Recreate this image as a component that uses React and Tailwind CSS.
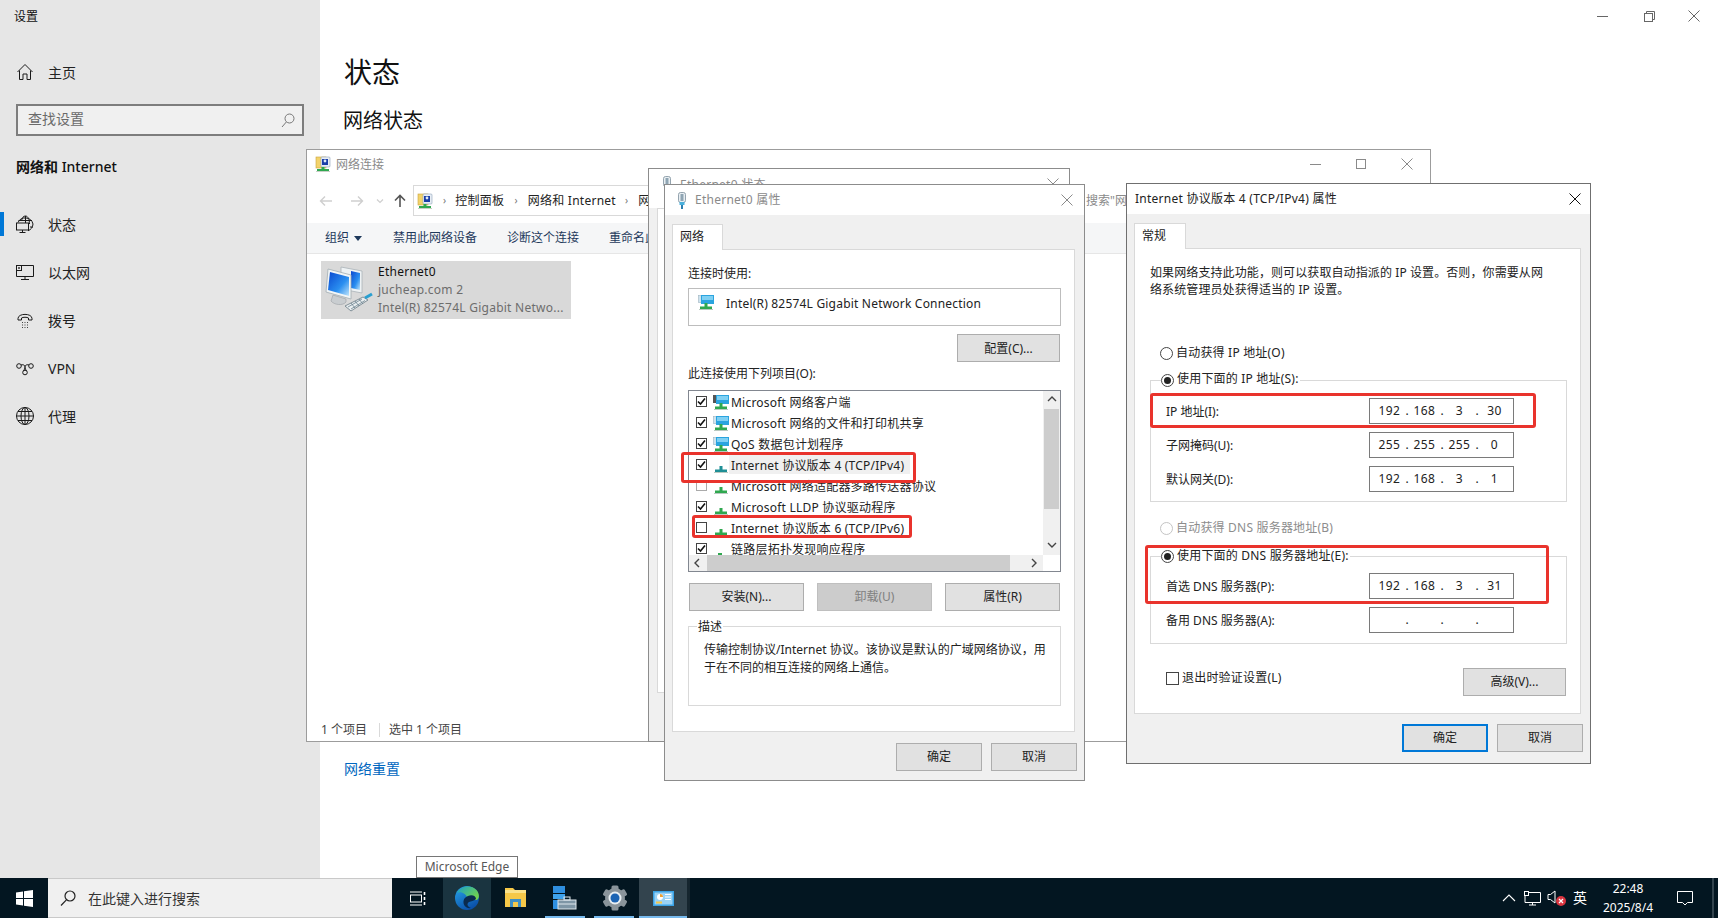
import React from "react";

const FONT = "font-['Noto_Sans','Noto_Sans_CJK_SC',sans-serif]";

function XIcon({ color = "#8a8a8a", size = 12 }) {
  return (
    <svg width={size} height={size} viewBox="0 0 12 12">
      <path d="M0.5 0.5 L11.5 11.5 M11.5 0.5 L0.5 11.5" stroke={color} strokeWidth="1" fill="none" />
    </svg>
  );
}

function NetBase({ teal, small }) {
  const c = teal ? "#1f8f96" : "#2fa84f";
  return small ? (
    <g>
      <rect x="5" y="12" width="4" height="3" fill={c} />
    </g>
  ) : (
    <g>
      <rect x="6.5" y="9" width="3" height="4" fill={c} />
      <rect x="2" y="12.5" width="12" height="2.5" fill={c} />
      <rect x="1" y="15" width="14" height="1" fill="#b9c9c0" />
    </g>
  );
}

function RowIcon({ type }) {
  return (
    <svg width="16" height="17" viewBox="0 0 16 17" className="shrink-0">
      {type === "pc" || type === "share" ? (
        <g>
          {type === "pc" ? <rect x="0" y="1" width="6" height="8" fill="#555" /> : <rect x="0.5" y="1.5" width="5" height="7" fill="#cfe3ee" stroke="#9fb5c2" strokeWidth="0.6" />}
          <rect x="3" y="1" width="13" height="9" fill="#2aa4df" />
          <rect x="4" y="2" width="11" height="4" fill="#7fd0f3" />
        </g>
      ) : null}
      <NetBase teal={type === "teal"} small={type === "tiny"} />
    </svg>
  );
}

function FolderNetIcon() {
  return (
    <svg width="16" height="16" viewBox="0 0 16 16" className="shrink-0">
      <rect x="1" y="1" width="10" height="11" fill="#f3d36b" stroke="#c9a43f" strokeWidth="0.6" />
      <rect x="6" y="1" width="9" height="10" rx="1" fill="#e8eef5" stroke="#8fa3b8" strokeWidth="0.6" />
      <rect x="7" y="3" width="6" height="6" fill="#1a3fa8" />
      <circle cx="10" cy="5" r="1.4" fill="#dfe9f5" />
      <rect x="6.5" y="11" width="3" height="2" fill="#2fa84f" />
      <rect x="2" y="13" width="12" height="2" fill="#2fa84f" />
      <rect x="1" y="15" width="14" height="1" fill="#c8cfc6" />
    </svg>
  );
}

function LargeNetIcon() {
  return (
    <svg width="48" height="52" viewBox="0 0 48 52" className="shrink-0">
      <defs>
        <linearGradient id="scr" x1="0" y1="0" x2="1" y2="1">
          <stop offset="0" stopColor="#0a48d0" />
          <stop offset="0.6" stopColor="#2a8ff0" />
          <stop offset="1" stopColor="#bfe4fb" />
        </linearGradient>
      </defs>
      <path d="M16 3 L37 7 L37 29 L16 25 Z" fill="#eef2f4" stroke="#a9b3b8" strokeWidth="0.8" />
      <path d="M26 7 L35 9 L35 26 L26 24 Z" fill="url(#scr)" />
      <path d="M3 5 L26 11 L26 35 L1 28 Z" fill="#f2f5f6" stroke="#a2adb3" strokeWidth="0.8" />
      <path d="M5 8 L24 13 L24 32 L3 26 Z" fill="url(#scr)" />
      <path d="M8 31 L21 35 L21 38 C18 42 9 41 6 37 Z" fill="#c9cdd0" stroke="#9aa0a4" strokeWidth="0.6" />
      <path d="M20 42 L38 33 L43 36 L26 47 Z" fill="#e9eef0" stroke="#76868f" strokeWidth="0.9" />
      <path d="M23 43 L37 35 M26 45 L40 36.5 M26 39 L30 44 M30 37 L34 42 M34 35 L38 40" stroke="#6f8490" strokeWidth="0.8" />
      <path d="M40 34 L47 30" stroke="#2a9fd0" strokeWidth="3" />
    </svg>
  );
}

function UsbIcon() {
  return (
    <svg width="12" height="17" viewBox="0 0 12 17" className="shrink-0">
      <rect x="2.5" y="0.5" width="7" height="10" rx="2" fill="#e8eef2" stroke="#7c8f9c" strokeWidth="0.8" />
      <rect x="4.5" y="2" width="3" height="7" fill="#8fa5b3" />
      <rect x="3.5" y="10" width="5" height="3" fill="#4ab0dc" />
      <rect x="5" y="13" width="2" height="4" fill="#2c7fb0" />
    </svg>
  );
}

function Btn({ children, cls = "", disabled, primary }) {
  return (
    <div
      className={
        "flex items-center justify-center h-[28px] text-[12px] " +
        (primary ? "border-2 border-[#0078d7] bg-[#e1e1e1] text-[#222] " : disabled ? "border border-[#bfbfbf] bg-[#cccccc] text-[#808080] " : "border border-[#adadad] bg-[#e1e1e1] text-[#222] ") +
        cls
      }
    >
      {children}
    </div>
  );
}

function Check({ checked, faint }) {
  return (
    <div className={"w-[11px] h-[11px] border bg-white flex items-center justify-center shrink-0 " + (faint ? "border-[#aaaaaa]" : "border-[#444]")}>
      {checked && (
        <svg width="9" height="9" viewBox="0 0 9 9">
          <path d="M1 4.5 L3.5 7 L8 1.5" stroke="#111" strokeWidth="1.6" fill="none" />
        </svg>
      )}
    </div>
  );
}

function Radio({ checked, disabled }) {
  return (
    <div className={"w-[13px] h-[13px] rounded-full border bg-white flex items-center justify-center shrink-0 " + (disabled ? "border-[#c4c4c4]" : "border-[#444]")}>
      {checked && <div className="w-[7px] h-[7px] rounded-full bg-[#222]" />}
    </div>
  );
}

function Chevron({ dir, color = "#444" }) {
  const d = { up: "M1 6 L5 2 L9 6", down: "M1 2 L5 6 L9 2", left: "M6 1 L2 5 L6 9", right: "M3 1 L7 5 L3 9" }[dir];
  return (
    <svg width="10" height="10" viewBox="0 0 10 10">
      <path d={d} stroke={color} strokeWidth="1.4" fill="none" />
    </svg>
  );
}

function Tab({ label, cls }) {
  return (
    <div className={"relative z-10 -mb-px h-[26px] bg-white border border-b-0 border-[#d9d9d9] text-[12px] text-[#222] pl-[7px] pt-[3px] leading-[18px] " + cls}>{label}</div>
  );
}

const rows = [
  { t: "Microsoft 网络客户端", c: true, i: "pc" },
  { t: "Microsoft 网络的文件和打印机共享", c: true, i: "share" },
  { t: "QoS 数据包计划程序", c: true, i: "share" },
  { t: "Internet 协议版本 4 (TCP/IPv4)", c: true, i: "teal", sel: true },
  { t: "Microsoft 网络适配器多路传送器协议", c: false, i: "net", faint: true },
  { t: "Microsoft LLDP 协议驱动程序", c: true, i: "net" },
  { t: "Internet 协议版本 6 (TCP/IPv6)", c: false, i: "net", gray: true },
  { t: "链路层拓扑发现响应程序", c: true, i: "tiny" },
];

function ListBox() {
  return (
    <div className="mt-[7px] w-[373px] h-[182px] border border-[#828790] bg-white flex flex-col">
      <div className="flex h-[164px]">
        <div className="w-[354px] h-[164px] overflow-hidden">
          {rows.map((r) => (
            <div key={r.t} className="flex items-center h-[21px] pl-[7px] text-[12px] text-[#222] whitespace-nowrap">
              <Check checked={r.c} faint={r.faint} />
              <div className="ml-[6px] translate-y-[1px]">
                <RowIcon type={r.i} />
              </div>
              <span className={"ml-0 pl-[2px] pr-[6px] h-[19px] leading-[21px] tracking-[0.22px] " + (r.sel ? "bg-[#f0f0f0]" : "")}>{r.t}</span>
            </div>
          ))}
        </div>
        <div className="w-[17px] h-[164px] bg-[#f0f0f0] flex flex-col items-center">
          <div className="h-[18px] flex items-center justify-center">
            <Chevron dir="up" />
          </div>
          <div className="w-[15px] h-[100px] bg-[#cdcdcd]" />
          <div className="mt-auto h-[18px] flex items-center justify-center">
            <Chevron dir="down" />
          </div>
        </div>
      </div>
      <div className="h-[16px] bg-[#f0f0f0] flex items-center pl-[4px] w-[354px]">
        <Chevron dir="left" />
        <div className="ml-[4px] w-[303px] h-[16px] bg-[#cdcdcd]" />
        <div className="ml-[19px]">
          <Chevron dir="right" />
        </div>
      </div>
    </div>
  );
}

function Annot({ cls }) {
  return <div className={"absolute border-[3px] border-[#e9332c] rounded-[3px] pointer-events-none z-20 " + cls} />;
}

function PropertiesDialog() {
  return (
    <div className="absolute left-[664px] top-[184px] w-[421px] h-[597px] border border-[#8c8c8c] bg-[#f0f0f0] flex flex-col">
      <div className="h-[30px] bg-white flex items-center pl-[11px] pr-[8px] shrink-0">
        <UsbIcon />
        <span className="ml-[7px] text-[12px] text-[#8a8a8a] tracking-[0.25px]">Ethernet0 属性</span>
        <div className="ml-auto mr-[3px]">
          <XIcon />
        </div>
      </div>
      <div className="pt-[9px] pl-[7px]">
        <Tab label="网络" cls="w-[51px]" />
        <div className="w-[403px] h-[483px] border border-[#d9d9d9] bg-white pl-[15px] pt-[13px] text-[12px] text-[#222] flex flex-col">
          <div className="h-[20px] leading-[22px]">连接时使用:</div>
          <div className="mt-[5px] w-[373px] h-[38px] border border-[#bdbdbd] flex items-start pl-[9px] pt-[5px]">
            <RowIcon type="share" />
            <span className="ml-[12px] leading-[20px] tracking-[0.2px]">Intel(R) 82574L Gigabit Network Connection</span>
          </div>
          <Btn cls="mt-[8px] ml-[269px] w-[103px]"><span className="translate-y-[1px]">配置(C)...</span></Btn>
          <div className="mt-px h-[20px] leading-[22px]">此连接使用下列项目(O):</div>
          <ListBox />
          <div className="mt-[11px] flex gap-[13px] pl-px">
            <Btn cls="w-[115px]">安装(N)...</Btn>
            <Btn cls="w-[115px]" disabled>卸载(U)</Btn>
            <Btn cls="w-[115px]">属性(R)</Btn>
          </div>
          <div className="mt-[15px] w-[373px] h-[80px] border border-[#d9d9d9] pl-[15px] pr-[8px] leading-[18px] flex flex-col">
            <div className="-mt-[9px] -ml-[7px] w-fit bg-white px-[1px]">描述</div>
            <div className="mt-[5px]">传输控制协议/Internet 协议。该协议是默认的广域网络协议，用于在不同的相互连接的网络上通信。</div>
          </div>
        </div>
      </div>
      <div className="flex justify-end gap-[9px] pr-[7px] pt-[11px]">
        <Btn cls="w-[86px]">确定</Btn>
        <Btn cls="w-[86px]">取消</Btn>
      </div>
    </div>
  );
}

function IpField({ parts }) {
  return (
    <div className="w-[145px] h-[26px] border border-[#7a7a7a] bg-white flex items-center pl-[5px] text-[12px] text-[#222] shrink-0">
      {parts.map((p, i) => (
        <React.Fragment key={i}>
          <span className="w-[29px] text-center tracking-[0.4px]">{p}</span>
          {i < 3 && <span className="w-[6px] text-center">.</span>}
        </React.Fragment>
      ))}
    </div>
  );
}

function FieldRow({ label, parts, cls = "" }) {
  return (
    <div className={"flex items-center justify-between h-[26px] pl-[15px] pr-[52px] " + cls}>
      <span className="translate-y-[1px]">{label}</span>
      <IpField parts={parts} />
    </div>
  );
}

function Legend({ label, checked, shift = "" }) {
  return (
    <div className="-mt-[11px] ml-[10px] w-fit h-[20px] bg-white pr-[1px] flex items-center">
      <Radio checked={checked} />
      <span className={"ml-[3px] tracking-[0.2px] " + shift}>{label}</span>
    </div>
  );
}

function IpDialog() {
  return (
    <div className="absolute left-[1126px] top-[183px] w-[465px] h-[581px] border border-[#6f6f6f] bg-[#f0f0f0] flex flex-col">
      <div className="h-[30px] bg-white flex items-center pl-[8px] pr-[9px] shrink-0">
        <span className="text-[12px] text-[#222] tracking-[0.25px]">Internet 协议版本 4 (TCP/IPv4) 属性</span>
        <div className="ml-auto">
          <XIcon color="#111" />
        </div>
      </div>
      <div className="pt-[9px] pl-[7px]">
        <Tab label="常规" cls="w-[52px]" />
        <div className="w-[447px] h-[466px] border border-[#d9d9d9] bg-white pt-[15px] text-[12px] text-[#222] flex flex-col">
          <div className="pl-[15px] leading-[17px] whitespace-nowrap tracking-[0.1px]">
            <div>如果网络支持此功能，则可以获取自动指派的 IP 设置。否则，你需要从网</div>
            <div>络系统管理员处获得适当的 IP 设置。</div>
          </div>
          <div className="mt-[45px] ml-[25px] h-[20px] flex items-center">
            <Radio />
            <span className="ml-[3px] tracking-[0.2px]">自动获得 IP 地址(O)</span>
          </div>
          <div className="mt-[17px] ml-[15px] w-[417px] border border-[#d9d9d9] pb-[9px]">
            <Legend label="使用下面的 IP 地址(S):" checked shift="-translate-y-[1px]" />
            <FieldRow cls="mt-[8px]" label="IP 地址(I):" parts={["192", "168", "3", "30"]} />
            <FieldRow cls="mt-[8px]" label="子网掩码(U):" parts={["255", "255", "255", "0"]} />
            <FieldRow cls="mt-[8px]" label="默认网关(D):" parts={["192", "168", "3", "1"]} />
          </div>
          <div className="mt-[16px] ml-[25px] h-[20px] flex items-center text-[#8d8d8d]">
            <Radio disabled />
            <span className="ml-[3px] tracking-[0.2px]">自动获得 DNS 服务器地址(B)</span>
          </div>
          <div className="mt-[18px] ml-[15px] w-[417px] border border-[#d9d9d9] pb-[10px]">
            <Legend label="使用下面的 DNS 服务器地址(E):" checked />
            <FieldRow cls="mt-[7px]" label="首选 DNS 服务器(P):" parts={["192", "168", "3", "31"]} />
            <FieldRow cls="mt-[8px]" label="备用 DNS 服务器(A):" parts={["\u00a0", "\u00a0", "\u00a0", "\u00a0"]} />
          </div>
          <div className="mt-[24px] pl-[31px] pr-[14px] flex justify-between items-start">
            <div className="flex items-center mt-[1px]">
              <div className="w-[13px] h-[13px] border border-[#444] bg-white" />
              <span className="ml-[3px] tracking-[0.2px]">退出时验证设置(L)</span>
            </div>
            <Btn cls="w-[103px]">高级(V)...</Btn>
          </div>
        </div>
      </div>
      <div className="flex justify-end gap-[9px] pr-[7px] pt-[10px]">
        <Btn cls="w-[86px]" primary>确定</Btn>
        <Btn cls="w-[86px]">取消</Btn>
      </div>
    </div>
  );
}

function StatusDialog() {
  return (
    <div className="absolute left-[648px] top-[168px] w-[422px] h-[574px] border border-[#8c8c8c] bg-[#f0f0f0] flex flex-col">
      <div className="h-[39px] bg-white flex items-start pl-[12px] pr-[10px] pt-[7px] shrink-0">
        <UsbIcon />
        <span className="ml-[7px] text-[12px] text-[#8a8a8a] tracking-[0.25px]">Ethernet0 状态</span>
        <div className="ml-auto mt-[2px]">
          <XIcon />
        </div>
      </div>
      <div className="ml-[8px] w-[404px] h-[485px] border border-[#d9d9d9] bg-white" />
    </div>
  );
}

function NetworkWindow() {
  return (
    <div className="absolute left-[306px] top-[149px] w-[1125px] h-[593px] border border-[#9c9c9c] bg-white flex flex-col">
      <div className="h-[28px] flex items-center pl-[8px] pr-[17px] shrink-0">
        <FolderNetIcon />
        <span className="ml-[5px] translate-y-[1px] text-[12px] text-[#8a8a8a]">网络连接</span>
        <div className="ml-auto flex items-center gap-[35px]">
          <div className="w-[11px] h-px bg-[#8a8a8a]" />
          <div className="w-[10px] h-[10px] border border-[#8a8a8a]" />
          <XIcon />
        </div>
      </div>
      <div className="mt-[7px] h-[31px] flex items-center shrink-0">
        <div className="w-[106px] flex items-center pl-[12px]">
          <svg width="92" height="14" viewBox="0 0 92 14">
            <path d="M13 7 H2 M6 2.5 L1.5 7 L6 11.5" stroke="#cfcfcf" strokeWidth="1.4" fill="none" />
            <path d="M32 7 H43 M39 2.5 L43.5 7 L39 11.5" stroke="#cfcfcf" strokeWidth="1.4" fill="none" />
            <path d="M58 5.5 L61 8.5 L64 5.5" stroke="#cfcfcf" strokeWidth="1.2" fill="none" />
            <path d="M81 13 V2 M76 6.5 L81 1.5 L86 6.5" stroke="#555" strokeWidth="1.6" fill="none" />
          </svg>
        </div>
        <div className="h-[31px] w-[660px] border border-[#d9d9d9] flex items-center pl-[3px] text-[12px] text-[#222] tracking-[0.25px]">
          <FolderNetIcon />
          <span className="ml-[10px] text-[#777] text-[10px]">›</span>
          <span className="ml-[9px]">控制面板</span>
          <span className="ml-[10px] text-[#777] text-[10px]">›</span>
          <span className="ml-[10px]">网络和 Internet</span>
          <span className="ml-[9px] text-[#777] text-[10px]">›</span>
          <span className="ml-[10px]">网络连接</span>
        </div>
        <span className="ml-[13px] text-[12px] text-[#8a8a8a] whitespace-nowrap">搜索"网络连接"</span>
      </div>
      <div className="mt-[7px] h-[31px] bg-[#f5f6f7] border-b border-[#e6e6e6] flex items-center pl-[18px] text-[12px] text-[#1e395b] shrink-0">
        <span>组织</span>
        <svg width="8" height="5" viewBox="0 0 8 5" className="ml-[5px]">
          <path d="M0 0 H8 L4 5 Z" fill="#1e395b" />
        </svg>
        <span className="ml-[31px]">禁用此网络设备</span>
        <span className="ml-[30px]">诊断这个连接</span>
        <span className="ml-[30px]">重命名此连接</span>
      </div>
      <div className="flex-1 pl-[14px] pt-[7px]">
        <div className="w-[250px] h-[58px] bg-[#d9d9d9] flex items-center pl-[4px]">
          <LargeNetIcon />
          <div className="ml-[5px] text-[12px] leading-[18px] tracking-[0.25px] whitespace-nowrap">
            <div className="text-[#111]">Ethernet0</div>
            <div className="text-[#6d6d6d]">jucheap.com 2</div>
            <div className="text-[#6d6d6d]">Intel(R) 82574L Gigabit Netwo...</div>
          </div>
        </div>
      </div>
      <div className="h-[24px] flex items-center pl-[14px] pt-[1px] text-[12px] text-[#444] shrink-0">
        <span>1 个项目</span>
        <div className="ml-[12px] w-px h-[14px] bg-[#d9d9d9]" />
        <span className="ml-[9px]">选中 1 个项目</span>
      </div>
    </div>
  );
}

function NavIcon({ name }) {
  const p = { width: 20, height: 20, viewBox: "0 0 20 20", fill: "none", stroke: "#1a1a1a", strokeWidth: 1 };
  if (name === "home")
    return (
      <svg {...p}>
        <path d="M2.5 10 L10 2.5 L17.5 10 M4.5 8.5 V17.5 H8 V12 H12 V17.5 H15.5 V8.5" />
      </svg>
    );
  if (name === "status")
    return (
      <svg {...p}>
        <path d="M3 8.5 A8 8 0 0 1 18 10 A8 8 0 0 1 13 16.8 M6.5 7 C7 3.5 8.5 2 10.5 2 C13 2 14.5 5.5 14.5 10 M3.5 6.5 H17 M10.5 2 V9 M15 13 H18" />
        <rect x="1.5" y="9" width="12" height="7" />
        <path d="M7.5 16 V18.5 M4.5 18.5 H10.5" />
      </svg>
    );
  if (name === "eth")
    return (
      <svg {...p}>
        <path d="M6 3.5 H18.5 V14.5 H1.5 V8.5 M10 14.5 V17.5 M6 17.5 H14" />
        <rect x="1.5" y="3.5" width="5" height="5" />
        <rect x="3.2" y="5.2" width="1.6" height="1.6" fill="#1a1a1a" stroke="none" />
      </svg>
    );
  if (name === "dial")
    return (
      <svg {...p}>
        <path d="M3 8.5 C3 3 17 3 17 8.5 L17 10 L13.5 10 L13.5 8 C12 7 8 7 6.5 8 L6.5 10 L3 10 Z" />
        <path d="M7 12.5 H7.8 M9.6 12.5 H10.4 M12.2 12.5 H13 M7 15 H7.8 M9.6 15 H10.4 M12.2 15 H13 M7 17.5 H7.8 M9.6 17.5 H10.4 M12.2 17.5 H13" strokeWidth="1" />
      </svg>
    );
  if (name === "vpn")
    return (
      <svg {...p}>
        <circle cx="4" cy="8" r="2.3" />
        <circle cx="16" cy="8" r="2.3" />
        <circle cx="10" cy="14.5" r="2.3" />
        <path d="M6 7 C9 6 12 8 8.5 12.8 M14 7 C11 6 8 8 11.5 12.8" />
      </svg>
    );
  return (
    <svg {...p}>
      <circle cx="10" cy="10" r="8.5" />
      <ellipse cx="10" cy="10" rx="4" ry="8.5" />
      <path d="M1.5 10 H18.5 M10 1.5 V18.5 M3 5.5 H17 M3 14.5 H17" />
    </svg>
  );
}

const navItems = [
  { n: "status", t: "状态", a: true },
  { n: "eth", t: "以太网" },
  { n: "dial", t: "拨号" },
  { n: "vpn", t: "VPN" },
  { n: "proxy", t: "代理" },
];

function Sidebar() {
  return (
    <aside className="w-[320px] bg-[#e6e6e6] shrink-0 flex flex-col">
      <div className="h-[34px] pl-[14px] flex items-center text-[12px] text-[#111]">设置</div>
      <div className="mt-[14px] h-[48px] flex items-center pl-[15px] text-[14px] text-[#222]">
        <NavIcon name="home" />
        <span className="ml-[13px]">主页</span>
      </div>
      <div className="mt-[8px] ml-[16px] w-[288px] h-[32px] border-2 border-[#7d7d7d] bg-[#f0f0f0] flex items-center pl-[10px] pr-[7px] text-[14px] text-[#6a6a6a]">
        <span className="-translate-y-[2px]">查找设置</span>
        <svg width="14" height="15" viewBox="0 0 14 15" className="ml-auto" fill="none" stroke="#777" strokeWidth="1">
          <circle cx="8.5" cy="5.5" r="4.5" />
          <path d="M5.3 9 L1 14" />
        </svg>
      </div>
      <div className="mt-[19px] pl-[16px] h-[22px] flex items-center text-[14px] font-bold text-[#111]">
        <span>网络和 <span className="font-medium">Internet</span></span>
      </div>
      <div className="mt-[23px] flex flex-col">
        {navItems.map((it) => (
          <div key={it.n} className="relative h-[48px] flex items-center pl-[15px] text-[14px] text-[#222]">
            {it.a && <div className="absolute left-0 top-[12px] w-[4px] h-[24px] bg-[#0078d7]" />}
            <NavIcon name={it.n} />
            <span className="ml-[13px]">{it.t}</span>
          </div>
        ))}
      </div>
    </aside>
  );
}

function MainPane() {
  return (
    <main className="flex-1 bg-white relative pl-[24px]">
      <div className="flex justify-end items-center h-[32px] pr-[18px]">
        <div className="w-[11px] h-px bg-[#666]" />
        <svg width="11" height="11" viewBox="0 0 11 11" fill="none" stroke="#666" className="ml-[36px]">
          <rect x="0.5" y="2.5" width="8" height="8" />
          <path d="M2.5 2.5 V0.5 H10.5 V8.5 H8.5" />
        </svg>
        <div className="ml-[33px] flex">
          <XIcon color="#666" />
        </div>
      </div>
      <h1 className="mt-[18px] text-[28px] leading-[44px] text-[#111]">状态</h1>
      <h2 className="mt-[13px] ml-[-1px] text-[20px] leading-[28px] text-[#111]">网络状态</h2>
      <div className="mt-[624px] text-[14px] leading-[20px] text-[#0067c0]">网络重置</div>
    </main>
  );
}

function WinLogo() {
  return (
    <svg width="17" height="17" viewBox="0 0 17 17" fill="#fff">
      <path d="M0 2.4 L7 1.4 V8 H0 Z M8 1.2 L17 0 V8 H8 Z M0 9 H7 V15.6 L0 14.6 Z M8 9 H17 V17 L8 15.8 Z" />
    </svg>
  );
}

function EdgeIcon() {
  return (
    <svg width="26" height="26" viewBox="0 0 26 26">
      <defs>
        <linearGradient id="eg1" x1="0" y1="0" x2="1" y2="0.6">
          <stop offset="0" stopColor="#1aa0c8" />
          <stop offset="1" stopColor="#6fd24e" />
        </linearGradient>
        <linearGradient id="eg2" x1="0" y1="0" x2="0.6" y2="1">
          <stop offset="0" stopColor="#27a5ea" />
          <stop offset="1" stopColor="#0a4fa8" />
        </linearGradient>
      </defs>
      <circle cx="13" cy="13" r="12" fill="url(#eg2)" />
      <path d="M3 8 C6 1 17 -1 22.5 5 C26 9 25.5 15 22 15 C19 15 14 15 13 12 C11.5 8.5 6 6 3 8 Z" fill="url(#eg1)" />
      <path d="M14 11 C18 9 22 11 22 14 C20 16 17 16 15 17 C12 19 14 22 17 23 C12 24 9 20 9.5 16 C10 13 12 12 14 11 Z" fill="#0a2b4e" />
    </svg>
  );
}

function Taskbar() {
  return (
    <footer className="h-[40px] bg-[#031621] flex items-stretch shrink-0 text-white">
      <div className="w-[48px] flex items-center justify-center">
        <WinLogo />
      </div>
      <div className="w-[344px] bg-[#f0f0f0] border-y border-[#c9c9c9] flex items-center pl-[12px] text-[14px] text-[#333]">
        <svg width="16" height="17" viewBox="0 0 16 17" fill="none" stroke="#222" strokeWidth="1.2">
          <circle cx="10" cy="6" r="5" />
          <path d="M6.4 9.8 L1 15.5" />
        </svg>
        <span className="ml-[12px]">在此键入进行搜索</span>
      </div>
      <div className="w-[51px] flex items-center justify-center">
        <svg width="16" height="15" viewBox="0 0 16 15" fill="none" stroke="#fff" strokeWidth="1">
          <rect x="0.5" y="4" width="11" height="7" />
          <path d="M0 1 H12 M0 14 H12" />
          <path d="M14.5 1 V4 M14.5 6 V9 M14.5 11 V14" strokeWidth="1.6" />
        </svg>
      </div>
      <div className="w-[48px] flex items-center justify-center bg-[#1a3440]">
        <EdgeIcon />
      </div>
      <div className="w-[48px] flex items-center justify-center">
        <svg width="23" height="20" viewBox="0 0 23 20">
          <path d="M1 0 H9 L11 2 H22 V19 H1 Z" fill="#f6c848" />
          <path d="M1 2 H22 V5 H1 Z" fill="#fbe28a" />
          <rect x="6" y="11" width="11" height="8" fill="#3f8fc4" />
          <rect x="9" y="14" width="5" height="5" fill="#f6c848" />
        </svg>
      </div>
      <div className="relative w-[51px] flex items-center justify-center">
        <svg width="26" height="24" viewBox="0 0 26 24">
          <rect x="1" y="0" width="12" height="7" fill="#2f8fe0" />
          <rect x="1" y="8" width="12" height="5" fill="#3ea2ec" />
          <rect x="1" y="14" width="12" height="9" fill="#2f8fe0" />
          <rect x="6" y="14" width="18" height="9" fill="#7e96a6" stroke="#dfe8ee" strokeWidth="1" />
          <rect x="12" y="11" width="6" height="3" fill="none" stroke="#dfe8ee" strokeWidth="1" />
          <path d="M6 18 H24" stroke="#dfe8ee" strokeWidth="1" />
        </svg>
        <div className="absolute bottom-0 left-[6px] right-[5px] h-[2px] bg-[#76b9ed]" />
      </div>
      <div className="relative w-[49px] flex items-center justify-center">
        <svg width="26" height="26" viewBox="0 0 26 26">
          <g fill="#8a949b">
            <rect x="9.5" y="0.5" width="7" height="25" rx="1.5" />
            <rect x="9.5" y="0.5" width="7" height="25" rx="1.5" transform="rotate(60 13 13)" />
            <rect x="9.5" y="0.5" width="7" height="25" rx="1.5" transform="rotate(120 13 13)" />
            <circle cx="13" cy="13" r="10" />
          </g>
          <circle cx="13" cy="13" r="6.5" fill="#e8eef2" />
          <circle cx="13" cy="13" r="4.5" fill="#1c64b4" />
        </svg>
        <div className="absolute bottom-0 left-[4px] right-[5px] h-[2px] bg-[#76b9ed]" />
      </div>
      <div className="relative w-[48px] flex items-center justify-center bg-[#33444e]">
        <svg width="21" height="15" viewBox="0 0 21 15">
          <rect x="0" y="0" width="21" height="15" fill="#3aa3e6" />
          <rect x="1.5" y="1.5" width="18" height="12" fill="#9ad2f5" />
          <circle cx="7" cy="6" r="3" fill="#fff" />
          <path d="M7 6 L7 3 A3 3 0 0 1 10 6 Z" fill="#f0a030" />
          <path d="M12 3.5 H18 M12 6 H18 M12 8.5 H18" stroke="#fff" strokeWidth="1.1" />
          <path d="M3 10.5 H9 V12.5 H3 Z" fill="#f6c848" />
        </svg>
        <div className="absolute bottom-0 left-0 right-0 h-[2px] bg-[#76b9ed]" />
      </div>
      <div className="w-[3px] bg-[#16262f]" />
      <div className="ml-auto flex items-center">
        <svg width="14" height="8" viewBox="0 0 14 8" fill="none" stroke="#fff" strokeWidth="1.1" className="mr-[8px]">
          <path d="M1 7 L7 1 L13 7" />
        </svg>
        <svg width="17" height="15" viewBox="0 0 17 15" fill="none" stroke="#fff" strokeWidth="1" className="mr-[6px]">
          <path d="M4 1.5 H16.5 V11.5 H1 V5 M8.5 11.5 V14 M5 14 H12" />
          <rect x="0.5" y="0.5" width="4" height="4" />
        </svg>
        <div className="relative w-[18px] h-[16px] mr-[8px]">
          <svg width="10" height="14" viewBox="0 0 10 14" fill="none" stroke="#fff" strokeWidth="1">
            <path d="M1 4.5 H3.5 L8 1 V13 L3.5 9.5 H1 Z" />
          </svg>
          <div className="absolute left-[9px] top-[6px] w-[10px] h-[10px] rounded-full bg-[#d9343f] flex items-center justify-center">
            <svg width="6" height="6" viewBox="0 0 6 6">
              <path d="M1 1 L5 5 M5 1 L1 5" stroke="#fff" strokeWidth="1.2" />
            </svg>
          </div>
        </div>
        <span className="text-[14px] w-[15px] mr-[7px] leading-none">英</span>
        <div className="w-[66px] flex flex-col items-center text-[12px] leading-[19px] text-white">
          <span>22:48</span>
          <span>2025/8/4</span>
        </div>
        <div className="ml-[12px] w-[24px] flex justify-center">
          <svg width="16" height="15" viewBox="0 0 16 15" fill="none" stroke="#fff" strokeWidth="1">
            <path d="M0.5 0.5 H15.5 V11.5 H10.5 L8 14 L5.5 11.5 H0.5 Z" />
          </svg>
        </div>
        <div className="ml-[15px] w-[2px] h-[40px] bg-[#33444e]" />
        <div className="w-[4px]" />
      </div>
    </footer>
  );
}

export default function App() {
  return (
    <div className={"relative w-[1718px] h-[918px] overflow-hidden flex flex-col " + FONT}>
      <div className="flex-1 flex min-h-0">
        <Sidebar />
        <MainPane />
      </div>
      <Taskbar />
      <NetworkWindow />
      <StatusDialog />
      <PropertiesDialog />
      <IpDialog />
      <Annot cls="left-[681px] top-[452px] w-[235px] h-[31px]" />
      <Annot cls="left-[692px] top-[515px] w-[220px] h-[23px]" />
      <Annot cls="left-[1150px] top-[393px] w-[386px] h-[35px]" />
      <Annot cls="left-[1145px] top-[545px] w-[404px] h-[59px]" />
      <div className="absolute left-[416px] top-[856px] w-[102px] h-[22px] bg-white border border-[#767676] flex items-center justify-center text-[12px] text-[#575757] z-30">Microsoft Edge</div>
    </div>
  );
}
